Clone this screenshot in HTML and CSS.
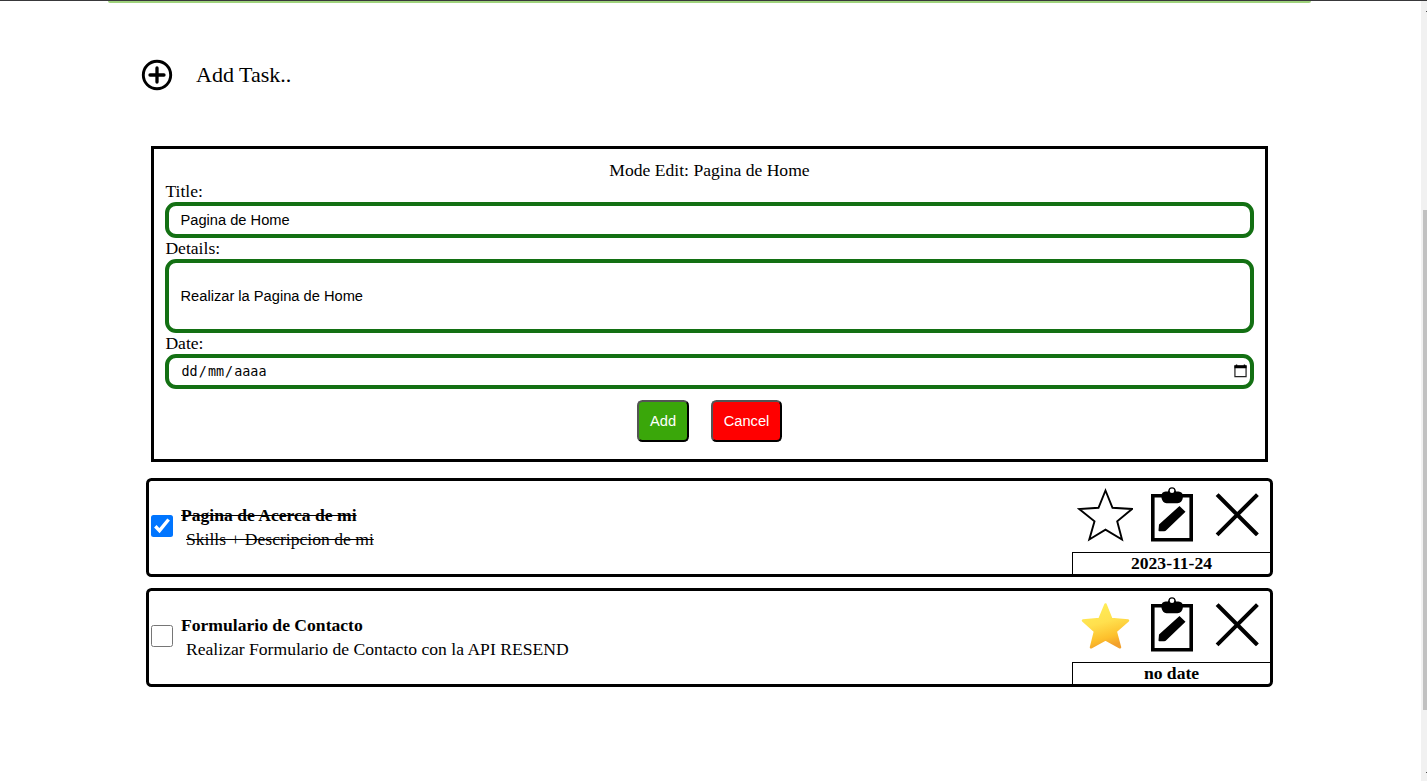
FILE: index.html
```html
<!DOCTYPE html>
<html lang="es">
<head>
<meta charset="utf-8">
<title>Tasks</title>
<link rel="stylesheet" href="styles.css">
</head>
<body>
<svg class="defs" width="0" height="0" aria-hidden="true">
  <defs>
    <linearGradient id="gold" x1="0.2" y1="0" x2="0.5" y2="1">
      <stop offset="0" stop-color="#ffee58"/><stop offset=".45" stop-color="#ffe04e"/><stop offset=".8" stop-color="#fdc02c"/><stop offset="1" stop-color="#f2a02c"/>
    </linearGradient>
    <symbol id="clip" viewBox="0 0 44 56">
      <path d="M2.8 8.8H41.2V52.7H2.8Z" fill="#fff" stroke="#000" stroke-width="3.6"/>
      <path d="M11.500 8.500Q11.500 4.900 15.500 4.500H18Q18.500 .2 22 .2T26 4.500H28.500Q32.800 4.900 32.800 8.500V11Q32 15.900 27.500 16.200H16.500Q12.500 15.700 11.500 11Z"/>
      <circle cx="22" cy="3.700" r="2.300" fill="#fff"/>
      <path d="M9 37.500L29.500 19L35.500 24.800L16.500 43Q15.500 44.300 14 44.300H9.300Q8.500 44.300 8.500 43.200Z"/>
    </symbol>
    <symbol id="cross" viewBox="0 0 44 44">
      <path d="M3.500 3L41 40.500M41 3L3.500 40.500" fill="none" stroke="#000" stroke-width="4" stroke-linecap="square"/>
    </symbol>
  </defs>
</svg>
<div class="window">
  <main class="page">
    <div class="progress"></div>
    <div class="add-task">
      <svg class="plus" viewBox="0 0 32 32"><circle cx="16" cy="16" r="13.700" fill="none" stroke="#000" stroke-width="2.900"/><path d="M16 9V23M9 16H23" stroke="#000" stroke-width="3.300" stroke-linecap="round"/></svg>
      <span>Add Task..</span>
    </div>
    <form class="editor">
      <div class="heading">Mode Edit: Pagina de Home</div>
      <label for="title">Title:</label>
      <input id="title" class="field" type="text" value="Pagina de Home">
      <label for="details">Details:</label>
      <input id="details" class="field tall" type="text" value="Realizar la Pagina de Home">
      <label>Date:</label>
      <div class="field date"><span class="format"><i>dd</i>/<i>mm</i>/<i>aaaa</i></span>
        <svg class="calendar" viewBox="0 0 14 14"><path d="M1 1.500H13V13H1Z" fill="none" stroke="#222" stroke-width="1.300"/><path d="M.5 1H13.500V4H.5ZM2 0H3.500V2H2ZM10.500 0H12V2H10.500Z"/></svg>
      </div>
      <div class="buttons"><button type="button" class="btn add">Add</button><button type="button" class="btn cancel">Cancel</button></div>
    </form>
    <section class="tasks">
      <article class="task">
        <span class="check checked"><svg viewBox="0 0 22 22"><path d="M4.300 11.300L8.500 15.600L17.600 4.500" fill="none" stroke="#fff" stroke-width="3.400"/></svg></span>
        <div class="text done"><b>Pagina de Acerca de mi</b><span class="detail">Skills + Descripcion de mi</span></div>
        <div class="side">
          <div class="icons">
            <svg class="star" viewBox="0 0 56 56"><path d="M28.500 3.500L35.500 20.800L55 22L40.200 34.300L45 52.500L28.500 42.700L12.300 52.500L17.500 34.300L2.200 22L21.500 20.800Z" fill="#fff" stroke="#000" stroke-width="1.900"/></svg>
            <svg class="clip"><use href="#clip"/></svg>
            <svg class="cross"><use href="#cross"/></svg>
          </div>
          <div class="due">2023-11-24</div>
        </div>
      </article>
      <article class="task">
        <span class="check"></span>
        <div class="text"><b>Formulario de Contacto</b><span class="detail">Realizar Formulario de Contacto con la API RESEND</span></div>
        <div class="side">
          <div class="icons">
            <svg class="star" viewBox="0 0 56 56"><path d="M28.500 7.500L34.300 22L51 23.500L38.700 34.300L43 50.300L28.500 42.500L14 50.300L18 34.300L6 23.500L22.500 22Z" fill="url(#gold)" stroke="url(#gold)" stroke-width="2.500" stroke-linejoin="round"/></svg>
            <svg class="clip"><use href="#clip"/></svg>
            <svg class="cross"><use href="#cross"/></svg>
          </div>
          <div class="due">no date</div>
        </div>
      </article>
    </section>
  </main>
  <aside class="scrollbar"><div class="arrow"></div><div class="thumb"></div><div class="arrow"></div></aside>
</div>
</body>
</html>
```
FILE: styles.css
```css
* { box-sizing: border-box; }
body { margin: 0; background: #fff; color: #000; overflow: hidden; font: 17.6px/21px "Liberation Serif", "Times New Roman", serif; }
.defs { position: absolute; }
.window { display: flex; height: 781px; border-top: 1px solid #38383a; }
.page { flex: 1; }
.progress { width: 1203px; height: 2px; margin-left: 108px; background: #9fd27c; border-radius: 0 0 3px 3px; }
.add-task { display: flex; align-items: center; gap: 23.500px; height: 32px; margin: 55px 0 0 140.500px; font-size: 22px; }
.plus { width: 32px; height: 32px; margin-top: 1px; }
.editor { width: 1117px; height: 316px; margin: 56px 0 0 151px; padding: 11px; border: 3px solid #000; }
.heading { text-align: center; }
.editor label { display: block; height: 21px; padding-left: .4px; }
.field { display: block; width: 1089px; height: 36px; border: 4px solid #137013; border-radius: 11px; padding: 0 11.500px; background: #fff; color: #000; font: 14.667px "Liberation Sans", Arial, sans-serif; }
.tall { height: 74px; }
.date { display: flex; align-items: center; justify-content: space-between; height: 35px; padding: 0 3px 0 12px; }
.format { font: 13.4px "DejaVu Sans Mono", monospace; }
.format i { font-style: normal; padding: 0 1.100px; }
.format i:first-child { padding-left: .5px; }
.calendar { width: 13px; height: 14px; margin-top: -1px; }
.buttons { display: flex; justify-content: center; gap: 22px; margin-top: 11px; }
.btn { height: 42px; padding: 0; border: 2px outset #000; border-radius: 5.5px; color: #fff; font: 14.667px "Liberation Sans", Arial, sans-serif; }
.add { width: 52px; background: #3aa70a; }
.cancel { width: 71px; background: #f00; }
.tasks { display: flex; flex-direction: column; gap: 11px; width: 1127px; margin: 16px 0 0 146px; }
.task { display: flex; height: 99px; border: 3px solid #000; border-radius: 5.5px; }
.check { width: 22px; height: 22px; margin: 34px 8px 0 2px; border: 1px solid #767676; border-radius: 2.500px; }
.checked { border: 0; background: #0075ff; }
.check svg { display: block; width: 22px; height: 22px; }
.text { flex: 1; display: flex; flex-direction: column; align-items: flex-start; padding-top: 22px; line-height: 24px; }
.done b, .done .detail { text-decoration: line-through; }
.detail { margin-left: 5px; }
.side { width: 198px; }
.icons { display: flex; height: 71px; padding-left: 5px; }
.star { width: 56px; height: 56px; margin-top: 6px; }
.clip { width: 44px; height: 56px; margin: 6px 0 0 17px; }
.cross { width: 44px; height: 44px; margin: 12px 0 0 21px; }
.due { height: 22px; border: solid #000; border-width: 1px 0 0 1px; text-align: center; font-weight: bold; }
.scrollbar { width: 6px; height: 780px; background: #f1f1f1; display: flex; flex-direction: column; align-items: flex-end; }
.arrow { width: 1px; height: 1px; margin-top: 10px; background: #505050; }
.thumb { width: 4px; height: 500px; margin: 198px 0 52px; background: #c1c1c1; }
```
